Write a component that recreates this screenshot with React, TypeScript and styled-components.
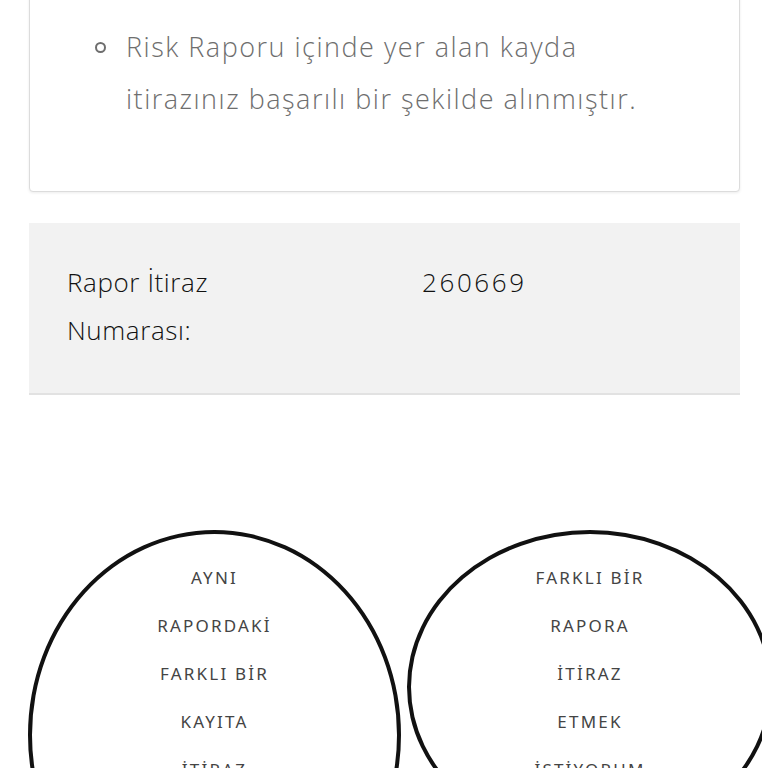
import styled, { createGlobalStyle } from "styled-components";

const GlobalStyle = createGlobalStyle`
  html, body {
    margin: 0;
    padding: 0;
    background: #fff;
    overflow: hidden;
  }
  body {
    font-family: "Open Sans", Lato, "Liberation Sans", sans-serif;
  }
`;

const Page = styled.div`
  width: 768px;
  height: 768px;
  overflow: hidden;
  padding: 0 28px 0 29px;
  box-sizing: border-box;
`;

const Card = styled.div`
  margin-top: -12px;
  border: 1px solid #dcdcdc;
  border-radius: 4px;
  box-shadow: 0 1px 3px rgba(0, 0, 0, 0.08);
  padding: 32px 64px 66px 0;
  background: #fff;
`;

const List = styled.ul`
  margin: 0;
  padding: 0 0 0 96px;
  list-style: none;
`;

const Item = styled.li`
  position: relative;
  font-size: 27px;
  font-weight: 300;
  letter-spacing: 1.5px;
  line-height: 52px;
  color: #6e6e6e;

  &::before {
    content: "";
    position: absolute;
    left: -31px;
    top: 21px;
    width: 7px;
    height: 7px;
    border: 2px solid #6e6e6e;
    border-radius: 50%;
  }
`;

const InfoBox = styled.div`
  margin-top: 31px;
  background: #f2f2f2;
  border-bottom: 2px solid #e2e2e2;
  padding: 35px 38px 39px;
  display: grid;
  grid-template-columns: 355px 1fr;
`;

const Label = styled.div`
  font-size: 26px;
  font-weight: 300;
  letter-spacing: 0.6px;
  line-height: 48px;
  color: #111;
`;

const Value = styled(Label)`
  letter-spacing: 2.6px;
`;

const Choices = styled.div`
  margin: 135px 0 0 -1px;
  width: 734px;
  overflow: hidden;
  display: flex;
  align-items: flex-start;
  gap: 6px;
`;

const Choice = styled.button<{ $w: number }>`
  flex-shrink: 0;
  width: ${(p) => p.$w}px;
  border: 4px solid #111;
  border-radius: 50%;
  background: #fff;
  padding: 20px 0 46px;
  display: flex;
  flex-direction: column;
  align-items: center;
  font-family: "Noto Sans", "Open Sans", sans-serif;
  font-size: 17px;
  letter-spacing: 2.2px;
  line-height: 48px;
  color: #444;
  cursor: pointer;
`;

const sameReport = ["AYNI", "RAPORDAKİ", "FARKLI BİR", "KAYITA", "İTİRAZ", "ETMEK", "İSTİYORUM"];
const otherReport = ["FARKLI BİR", "RAPORA", "İTİRAZ", "ETMEK", "İSTİYORUM"];

export default function App() {
  return (
    <>
      <GlobalStyle />
      <Page>
        <Card>
          <List>
            <Item>
              Risk Raporu içinde yer alan kayda itirazınız başarılı bir şekilde
              alınmıştır.
            </Item>
          </List>
        </Card>
        <InfoBox>
          <Label>
            Rapor İtiraz
            <br />
            Numarası:
          </Label>
          <Value>260669</Value>
        </InfoBox>
        <Choices>
          <Choice $w={373}>
            {sameReport.map((w) => (
              <span key={w}>{w}</span>
            ))}
          </Choice>
          <Choice $w={366}>
            {otherReport.map((w) => (
              <span key={w}>{w}</span>
            ))}
          </Choice>
        </Choices>
      </Page>
    </>
  );
}
